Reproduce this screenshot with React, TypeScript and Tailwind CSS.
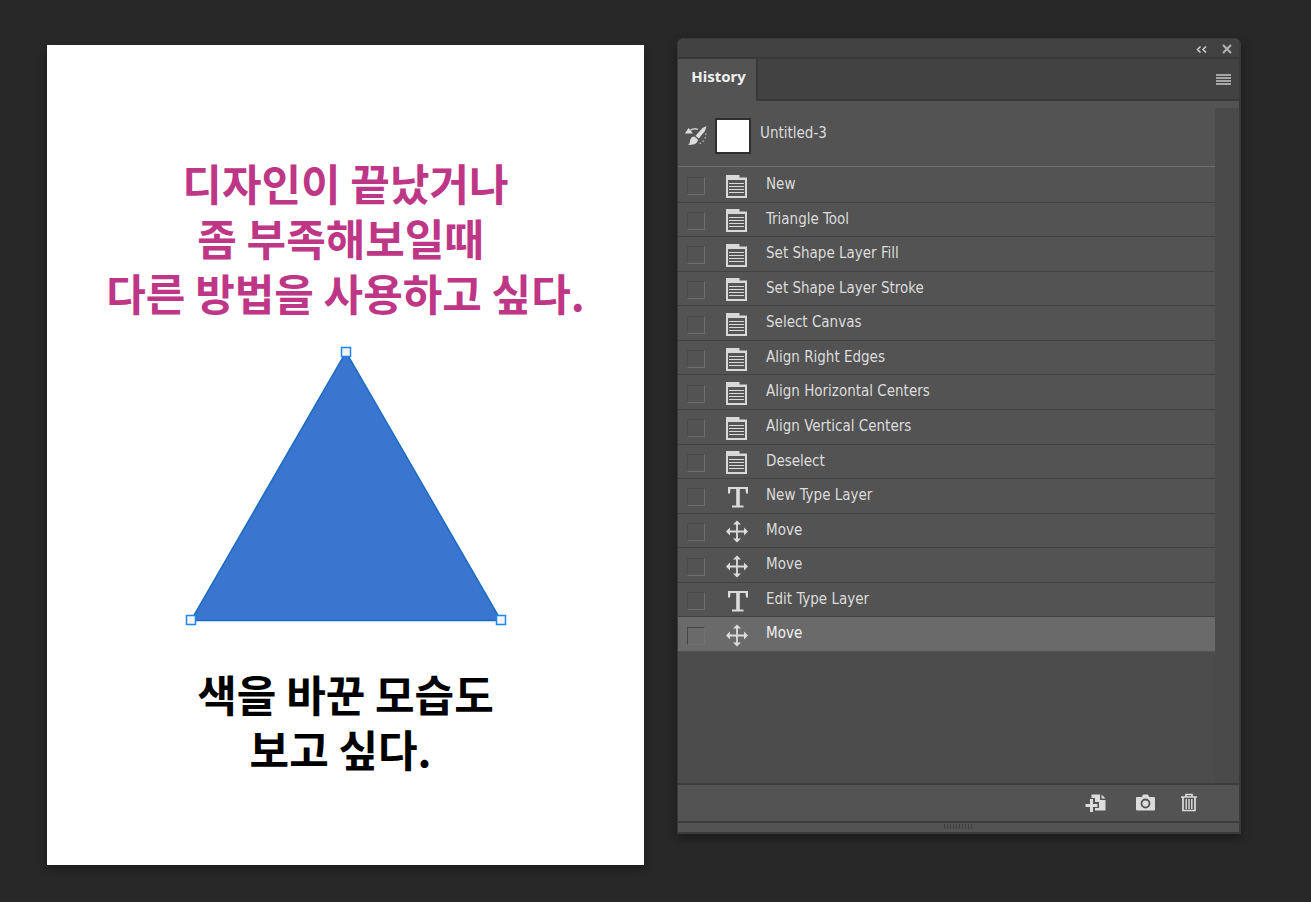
import { useState } from "react";

type StepKind = "command" | "type" | "move";

interface Step {
  label: string;
  kind: StepKind;
}

const STEPS: Step[] = [
  { label: "New", kind: "command" },
  { label: "Triangle Tool", kind: "command" },
  { label: "Set Shape Layer Fill", kind: "command" },
  { label: "Set Shape Layer Stroke", kind: "command" },
  { label: "Select Canvas", kind: "command" },
  { label: "Align Right Edges", kind: "command" },
  { label: "Align Horizontal Centers", kind: "command" },
  { label: "Align Vertical Centers", kind: "command" },
  { label: "Deselect", kind: "command" },
  { label: "New Type Layer", kind: "type" },
  { label: "Move", kind: "move" },
  { label: "Move", kind: "move" },
  { label: "Edit Type Layer", kind: "type" },
  { label: "Move", kind: "move" },
];

function CommandIcon() {
  return (
    <svg width="22" height="23" viewBox="0 0 22 23" className="block" aria-hidden>
      <path d="M0 0h13.5v2.500H21V23H0z" fill="#d8d8d8" />
      <path d="M2 5h17v16H2z" fill="#565656" />
      <path d="M3 8.500h15M3 11.500h15M3 14.500h15M3 17.500h15" stroke="#d8d8d8" strokeWidth="1" />
    </svg>
  );
}

function TypeIcon() {
  return (
    <svg width="22" height="23" viewBox="0 0 22 23" className="block" aria-hidden>
      <path
        d="M2 1h20v6.500h-2L19.500 3h-5.700v16.500h3.700v2H6v-2h4.200V3H4.500L4 7.500H2z"
        fill="#dcdcdc"
      />
    </svg>
  );
}

function MoveIcon() {
  return (
    <svg width="22" height="23" viewBox="0 0 22 23" className="block" aria-hidden>
      <path d="M11 2.500v18M2 11.500h18" stroke="#dcdcdc" strokeWidth="1.800" />
      <path
        d="M11 0.500l4 4H7zM11 22.500l4-4H7zM0 11.500l4-4v8zM22 11.500l-4-4v8z"
        fill="#dcdcdc"
      />
    </svg>
  );
}

function HistoryBrushIcon() {
  return (
    <svg width="22" height="20" viewBox="0 0 22 20" aria-hidden>
      <path d="M0 7.500L3.500 2 8 7.500z" fill="#dcdcdc" />
      <path d="M5 4.500C7.500 2.500 10.500 2.300 13 3.400" fill="none" stroke="#c8c8c8" strokeWidth="1.400" />
      <path d="M21.500 0L20 5 13.800 12.500 10.500 9.800 17.500 2z" fill="#dcdcdc" />
      <path d="M9.300 10.600l3.600 3c-.2 3.700-3 5.600-9.700 5.400 1.600-1.200 1.400-2.600 2-4.800.6-2.200 2-3.600 4.100-3.600z" fill="#dcdcdc" />
      <path d="M20 7.500h1.600v1.600H20zM19.500 11h1.600v1.600h-1.600zM17.500 14.200h1.600v1.600h-1.600zM14.500 16.500h1.600v1.600h-1.600z" fill="#aaa" />
    </svg>
  );
}

const ICONS: Record<StepKind, () => React.JSX.Element> = {
  command: CommandIcon,
  type: TypeIcon,
  move: MoveIcon,
};

function Artboard() {
  return (
    <section
      aria-label="Canvas"
      className="mt-[7px] flex flex-col items-center self-start overflow-hidden bg-white pt-[110px] pb-[89px] text-center font-['Noto_Sans_CJK_KR',sans-serif] text-[43px] leading-[55px] font-bold shadow-[0_5px_8px_rgba(0,0,0,0.3)]"
    >
      <h1 className="whitespace-pre text-[#be3787]">
        {"디자인이 끝났거나\n좀 부족해보일때 \n다른 방법을 사용하고 싶다."}
      </h1>
      <svg width="322" height="282" viewBox="0 0 322 282" className="mt-[25px] block" aria-label="Triangle">
        <path d="M161 7L316 275.500H6z" fill="#3a75d0" stroke="#1b6bc0" strokeWidth="1.500" />
        {[
          [161, 7],
          [6, 275],
          [316, 275],
        ].map(([x, y]) => (
          <rect key={x} x={x - 4.5} y={y - 4.5} width="9" height="9" fill="#f4f4f4" stroke="#1b86f0" strokeWidth="1.500" />
        ))}
      </svg>
      <p className="mt-[39px] whitespace-pre text-black">{"색을 바꾼 모습도\n보고 싶다. "}</p>
    </section>
  );
}

function HistoryPanel() {
  const [current, setCurrent] = useState(STEPS.length - 1);

  return (
    <section
      aria-label="History"
      className="flex flex-col self-start rounded-t-md border border-r-2 border-b-2 border-[#3a3a3a] bg-[#535353] font-['DejaVu_Sans_Condensed','Noto_Sans',sans-serif] text-[15px] text-[#dcdcdc] shadow-[0_4px_10px_rgba(0,0,0,0.35)]"
    >
      <header className="flex h-[18px] items-center justify-end gap-[15px] rounded-t-md bg-[#424242] pt-[2px] pr-[7px]">
        <button type="button" aria-label="Collapse">
          <svg width="11" height="7" viewBox="0 0 11 7" className="block" aria-hidden>
            <path d="M4.500 0.500l-3 3 3 3M10 0.500l-3 3 3 3" fill="none" stroke="#d0d0d0" strokeWidth="1.500" />
          </svg>
        </button>
        <button type="button" aria-label="Close">
          <svg width="10" height="10" viewBox="0 0 10 10" className="block" aria-hidden>
            <path d="M1 1l8 8M9 1L1 9" stroke="#b4b4b4" strokeWidth="2" />
          </svg>
        </button>
      </header>

      <div className="flex h-11 items-stretch justify-between border-t-2 border-[#383838] bg-[#424242]">
        <button
          type="button"
          className="w-20 border-r-2 border-[#383838] bg-[#535353] pb-[7px] pl-[3px] text-center font-['Noto_Sans',sans-serif] font-bold text-[#f0f0f0]"
        >
          History
        </button>
        <div className="flex flex-1 items-center justify-end border-b-2 border-[#383838] pr-2">
          <button type="button" aria-label="Panel menu">
            <svg width="15" height="11" viewBox="0 0 15 11" className="block" aria-hidden>
              <path d="M0 1h15M0 4h15M0 7h15M0 10h15" stroke="#a6a6a6" strokeWidth="2" />
            </svg>
          </button>
        </div>
      </div>

      <div className="flex h-[682px]">
        <div className="flex flex-1 flex-col bg-[#4c4c4c]">
          <div className="flex h-[66px] items-center border-b border-[#6f6f6f] bg-[#535353] pt-1 pl-[7px]">
            <HistoryBrushIcon />
            <div className="ml-2 size-9 border-2 border-[#2e2e2e] bg-white" />
            <span className="ml-[9px] pb-1">Untitled-3</span>
          </div>
          <ol className="grid h-[485px] auto-rows-fr bg-[#535353] pt-px">
            {STEPS.map((step, i) => {
              const Icon = ICONS[step.kind];
              const active = i === current;
              return (
                <li
                  key={i}
                  className={`flex items-center border-b pl-[9px] ${
                    active ? "border-[#535353] bg-[#6a6a6a] text-[#f2f2f2]" : "border-[#424242]"
                  }`}
                >
                  <input
                    type="checkbox"
                    aria-label={`Set history brush source: ${step.label}`}
                    className={`mt-[3px] size-[18px] appearance-none border ${
                      active
                        ? "border-t-[#454545] border-r-[#707070] border-b-[#707070] border-l-[#454545]"
                        : "border-t-[#4a4a4a] border-r-[#6e6e6e] border-b-[#6e6e6e] border-l-[#4a4a4a]"
                    }`}
                  />
                  <button
                    type="button"
                    onClick={() => setCurrent(i)}
                    className="ml-[21px] flex flex-1 items-center gap-[18px] text-left"
                  >
                    <span className="pt-[3px]">
                      <Icon />
                    </span>
                    <span className="pb-px">{step.label}</span>
                  </button>
                </li>
              );
            })}
          </ol>
        </div>
        <div className="w-6 border-t-[7px] border-[#535353] bg-[#4a4a4a]" />
      </div>

      <footer className="flex h-10 items-center justify-end border-y-2 border-[#3c3c3c] pr-[42px] pb-px">
        <button type="button" aria-label="Create new document from current state">
          <svg width="22" height="18" viewBox="0 0 22 18" className="block" aria-hidden>
            <path d="M6.500 0.500H15V6h5.500v10.500h-14z" fill="#dcdcdc" />
            <path d="M16.500 0.500l4 4h-4z" fill="#dcdcdc" />
            <path d="M4 4h6v4h4v6h-4v4H4z" fill="#535353" />
            <path d="M6.500 5v13M0.500 11.500h12" stroke="#dcdcdc" strokeWidth="3" />
          </svg>
        </button>
        <button type="button" aria-label="Create new snapshot" className="ml-[29px]">
          <svg width="19" height="18" viewBox="0 0 19 18" className="block" aria-hidden>
            <path d="M1 3h5l1-2.500h5L13 3h5q1 0 1 1v11.500q0 1-1 1H1q-1 0-1-1V4q0-1 1-1z" fill="#dcdcdc" />
            <circle cx="9.500" cy="9.500" r="4" fill="#dcdcdc" stroke="#535353" strokeWidth="1.800" />
          </svg>
        </button>
        <button type="button" aria-label="Delete current state" className="ml-[26px]">
          <svg width="16" height="19" viewBox="0 0 16 19" className="block" aria-hidden>
            <path d="M0 4h16M5 4V1.500h6V4M2 4v13.500h12V4" fill="none" stroke="#dcdcdc" strokeWidth="1.700" />
            <path d="M5.200 6v10M8 6v10M10.800 6v10" stroke="#dcdcdc" strokeWidth="1.400" />
          </svg>
        </button>
      </footer>

      <div className="flex h-[9px] justify-center gap-[2px] pt-px pr-[2px]">
        {Array.from({ length: 10 }, (_, i) => (
          <span key={i} className="h-[5px] w-px bg-[#404040]" />
        ))}
      </div>
    </section>
  );
}

export default function App() {
  return (
    <main className="grid min-h-screen grid-cols-[597fr_564fr] gap-[33px] bg-[#282828] pt-[38px] pr-[70px] pb-8 pl-[47px]">
      <Artboard />
      <HistoryPanel />
    </main>
  );
}
